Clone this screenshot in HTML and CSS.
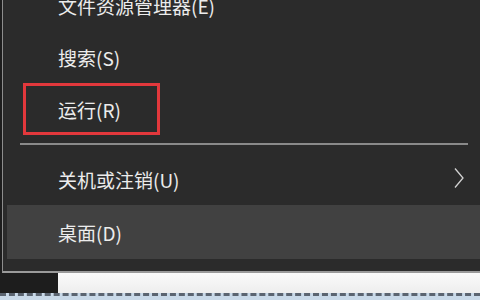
FILE: index.html
```html
<!DOCTYPE html>
<html lang="zh-CN">
<head>
    <meta charset="UTF-8">
    <meta name="viewport" content="width=device-width, initial-scale=1.0">
    <title>开始菜单</title>
    <link rel="stylesheet" href="styles.css">
</head>
<body>
    <div class="menu">
        <ul class="menu-list">
            <li class="item">文件资源管理器(E)</li>
            <li class="item">搜索(S)</li>
            <li class="item run">
                运行(R)
                <span class="mark"></span>
            </li>
        </ul>
        <div class="sep"></div>
        <ul class="menu-list">
            <li class="item">
                关机或注销(U)
                <svg class="arrow" width="12" height="22" viewBox="0 0 12 22">
                    <polyline points="2,1.5 10,11 2,20.5" fill="none" stroke="#d2d2d2" stroke-width="1.3"/>
                </svg>
            </li>
            <li class="item active">桌面(D)</li>
        </ul>
    </div>
    <div class="below">
        <div class="taskbar-edge"></div>
        <div class="window"></div>
    </div>
    <div class="dashes"></div>
</body>
</html>
```

FILE: styles.css
```css
*{
    padding: 0;
    margin: 0;
    box-sizing: border-box;
}
body{
    width: 480px;
    height: 300px;
    overflow: hidden;
    background-color: #1d1d1d;
    font-family: "Noto Sans CJK SC", "Microsoft YaHei", sans-serif;
}
.menu{
    margin-left: 2px;
    height: 273px;
    background-color: #2b2b2b;
    border-left: 1px solid #8d8d8d;
    border-bottom: 2px solid #9a9a9a;
    overflow: hidden;
}
.menu-list{
    list-style: none;
}
.menu-list:first-child{
    margin-top: -21px;
}
.item{
    position: relative;
    height: 52px;
    margin-left: 4px;
    padding-left: 51px;
    display: flex;
    align-items: center;
    color: #ececec;
    font-size: 19px;
}
.item.active{
    height: 54px;
    background-color: #414141;
}
.sep{
    height: 2px;
    margin: 8px 12px 8px 17px;
    background-color: #8a8a8a;
}
.arrow{
    position: absolute;
    right: 15px;
    top: 14px;
}
/* red annotation box around "run" */
.mark{
    position: absolute;
    left: 16px;
    top: 0;
    width: 137px;
    height: 52px;
    border: 3px solid #e2383c;
}
.below{
    display: flex;
    height: 20px;
}
.taskbar-edge{
    width: 58px;
    background-color: #1d1d1d;
}
.window{
    flex: 1;
    background: linear-gradient(#fafafa, #eeeeee);
}
.dashes{
    height: 7px;
    background-color: #c9d9e8;
    border-top: 3px dashed #5b6470;
}
```
